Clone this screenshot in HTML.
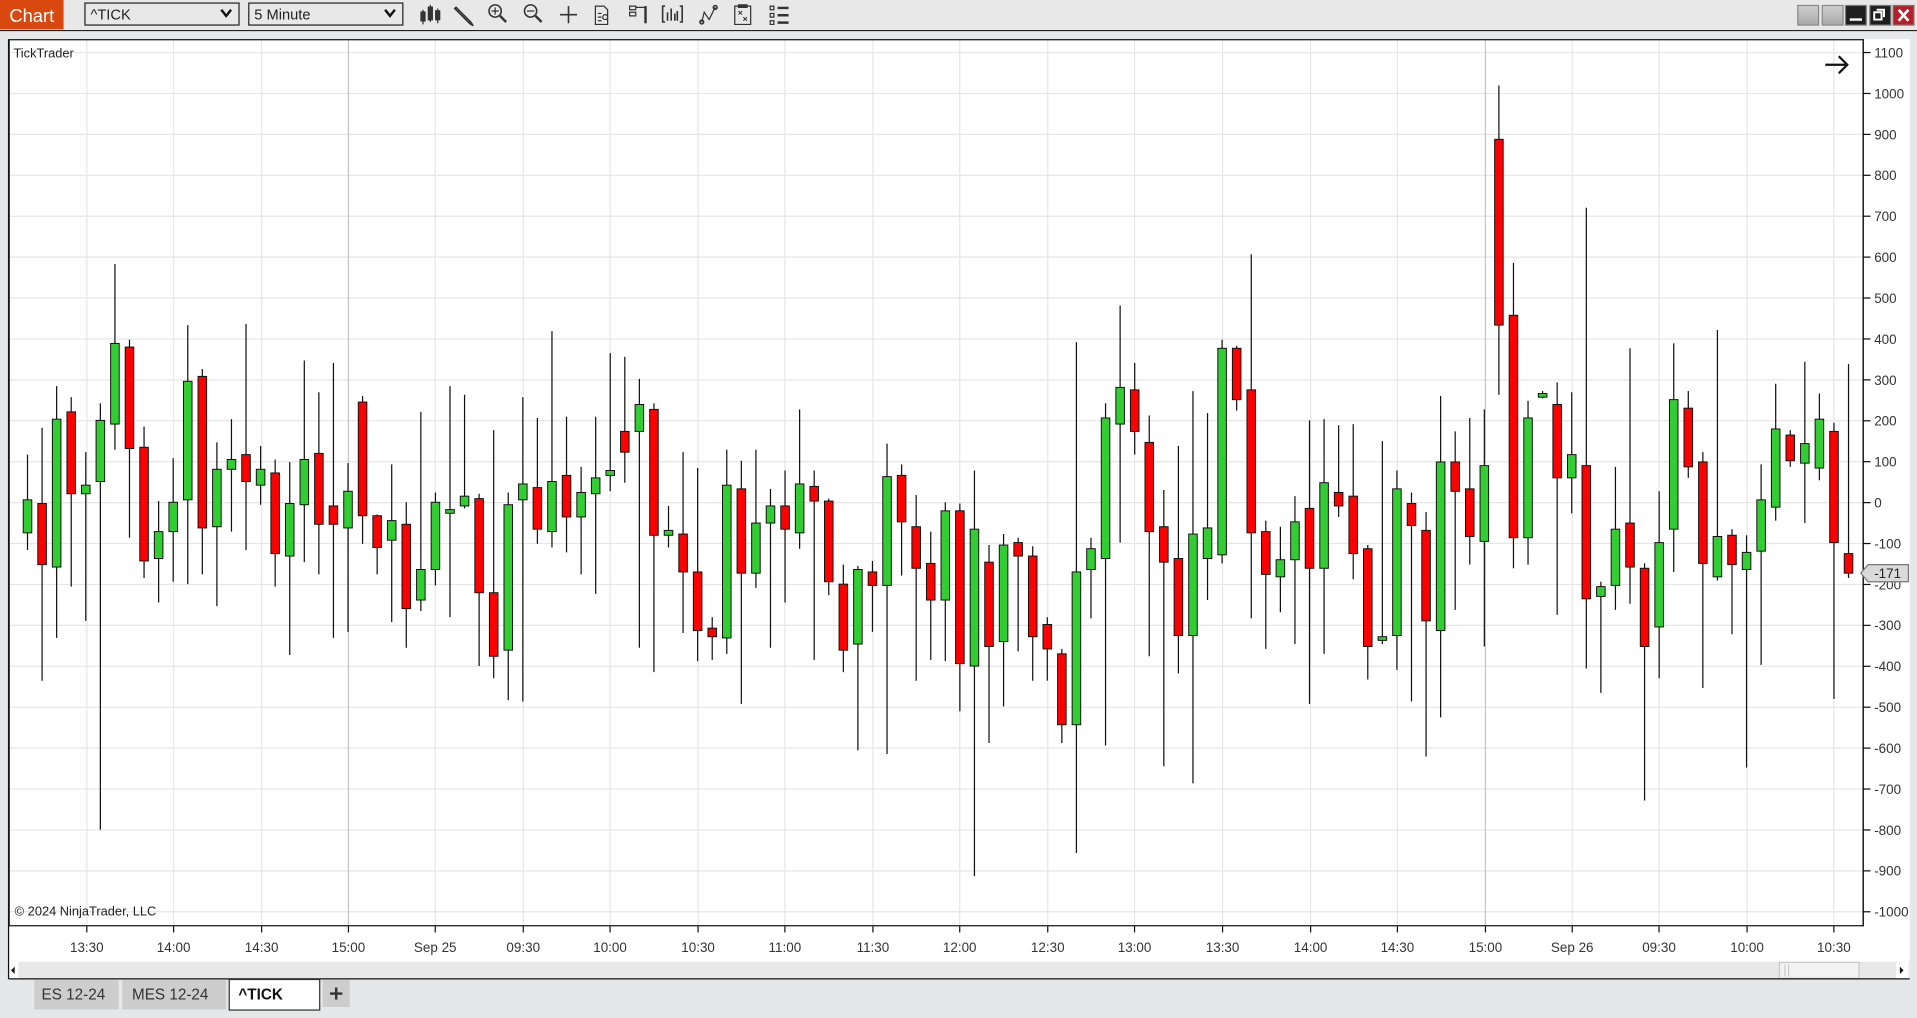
<!DOCTYPE html>
<html><head><meta charset="utf-8"><style>
html,body{margin:0;padding:0;background:#e6e7e8;overflow:hidden}
svg{display:block}
text{font-family:"Liberation Sans",sans-serif}
</style></head><body>
<svg id="s" width="1917" height="1018" viewBox="0 0 1568 833" preserveAspectRatio="none" xmlns="http://www.w3.org/2000/svg">
<rect x="0" y="0" width="1568" height="833" fill="#e6e7e8"/>
<!-- toolbar -->
<rect x="0" y="0" width="1568" height="25" fill="#e8e8e8"/>
<line x1="0" y1="25" x2="1568" y2="25" stroke="#222" stroke-width="1"/>
<rect x="0" y="0" width="52" height="24" fill="#d9480f"/>
<text x="26" y="18" font-size="15" fill="#fff" text-anchor="middle">Chart</text>
<rect x="69.5" y="2.5" width="126" height="18" fill="#e8e8e8" stroke="#222"/>
<text x="74" y="16" font-size="12" fill="#222">^TICK</text>
<path d="M181 8 l4 5 l4 -5" fill="none" stroke="#111" stroke-width="2"/>
<rect x="203.5" y="2.5" width="126" height="18" fill="#e8e8e8" stroke="#222"/>
<text x="208" y="16" font-size="12" fill="#222">5 Minute</text>
<path d="M315 8 l4 5 l4 -5" fill="none" stroke="#111" stroke-width="2"/>
<g stroke="#333" fill="none" stroke-width="1.3">
 <!-- candles icon -->
 <path d="M346 8v12M352 4v14M358 7v12" stroke-width="1"/><rect x="344.5" y="10" width="3" height="7" fill="#333"/><rect x="350.5" y="6" width="3" height="10" fill="#333"/><rect x="356.5" y="9" width="3" height="7" fill="#333"/>
 <!-- pencil -->
 <path d="M373 6 l12 12 l2 3 l-3 -2 l-12 -12 z"/>
 <!-- zoom in -->
 <circle cx="405" cy="9" r="5"/><path d="M409 13 l5 5" stroke-width="2"/><path d="M402 9h6M405 6v6" stroke-width="1"/>
 <!-- zoom out -->
 <circle cx="434" cy="9" r="5"/><path d="M438 13 l5 5" stroke-width="2"/><path d="M431 9h6" stroke-width="1"/>
 <!-- crosshair -->
 <path d="M458 12h14M465 5v14"/>
 <!-- doc zoom -->
 <path d="M487 5h7l3 3v12h-10z" stroke-width="1"/><path d="M489 11h3M489 14h3M489 17h3" stroke-width="1"/><circle cx="495" cy="14" r="2" stroke-width="1"/>
 <!-- panel -->
 <path d="M515 5h5v3h-5zM515 10h5v3h-5zM520 6h8v13" stroke-width="1"/><path d="M528 5v14" stroke-width="2"/>
 <!-- bars bracket -->
 <path d="M544 5h-2v13h2M556 5h2v13h-2M546 10v7M549 7v10M552 11v6M554 9v8" stroke-width="1.3"/>
 <!-- line draw -->
 <path d="M574 18 l2 -8 l4 6 l5 -10" stroke-width="1"/><circle cx="574" cy="18" r="1.5"/><circle cx="585" cy="6" r="1.5"/>
 <!-- clipboard -->
 <path d="M601 5h13v15h-13z M604 4h7v2h-7z" stroke-width="1"/><path d="M604 9l3 3M607 9l-3 3M608 14l3 3M611 14l-3 3" stroke-width="0.8"/>
 <!-- list -->
 <path d="M630 5h3v3h-3zM630 11h3v3h-3zM630 17h3v3h-3z" stroke-width="1"/><path d="M636 6.5h9M636 12.5h9M636 18.5h9" stroke-width="2"/>
</g>
<!-- window buttons -->
<defs><linearGradient id="gg" x1="0" y1="0" x2="0" y2="1"><stop offset="0" stop-color="#cfcfcf"/><stop offset="1" stop-color="#a9a9a9"/></linearGradient></defs>
<rect x="1470.5" y="4.5" width="17" height="16" fill="url(#gg)" stroke="#888"/>
<rect x="1490.5" y="4.5" width="17" height="16" fill="url(#gg)" stroke="#888"/>
<rect x="1509.5" y="4.5" width="17" height="16" fill="#1e1e1e" stroke="#777"/>
<path d="M1513 16h10" stroke="#fff" stroke-width="2"/>
<rect x="1529.5" y="4.5" width="17" height="16" fill="#1e1e1e" stroke="#777"/>
<path d="M1535 8h6v6M1533 10h6v6h-6z" stroke="#fff" stroke-width="1.6" fill="none"/>
<rect x="1548.5" y="4.5" width="17" height="16" fill="#b5202a" stroke="#777"/>
<path d="M1553 8l8 9M1561 8l-8 9" stroke="#fff" stroke-width="2.2"/>
<!-- chart frame -->
<rect x="7" y="32" width="1555" height="769" fill="#fff"/>
<g id="grid" stroke="#e6e6e6" stroke-width="1"></g>
<g id="candles"></g>
<rect x="7.5" y="32.5" width="1516.5" height="725" fill="none" stroke="#111"/>
<line x1="1524" y1="32" x2="1524" y2="758" stroke="#111"/>
<g id="axis" font-size="11" fill="#333"></g>
<text x="11" y="47" font-size="10.5" fill="#222">TickTrader</text>
<text x="12" y="749" font-size="10.5" fill="#222">© 2024 NinjaTrader, LLC</text>
<path d="M1493 53h17M1504 46l7 7l-7 7" fill="none" stroke="#111" stroke-width="1.8"/>
<!-- current price -->
<path d="M1522 469 l6 -7 h33 v14 h-33 z" fill="#dadada" stroke="#777"/>
<text x="1533" y="473" font-size="11" fill="#222">-171</text>
<!-- scrollbar -->
<rect x="7" y="787" width="1555" height="14" fill="#e8e8e8"/>
<rect x="7" y="787" width="8" height="14" fill="#fff"/>
<path d="M12 791v6l-3 -3z" fill="#111"/>
<rect x="1455.5" y="787.5" width="65" height="13" fill="#f3f3f3" stroke="#c8c8c8"/>
<path d="M1460 789v10M1463 789v10" stroke="#ccc"/>
<rect x="1551" y="787" width="10" height="14" fill="#fff"/>
<path d="M1554 791v6l3 -3z" fill="#111"/>
<line x1="7" y1="801" x2="1562" y2="801" stroke="#111"/>
<line x1="7" y1="32" x2="7" y2="801" stroke="#111"/>
<!-- tabs -->
<rect x="28" y="802" width="69" height="24" fill="#cdcdcd"/>
<text x="34" y="818" font-size="12.5" fill="#333">ES 12-24</text>
<rect x="100" y="802" width="85" height="24" fill="#cdcdcd"/>
<text x="108" y="818" font-size="12.5" fill="#333">MES 12-24</text>
<rect x="187.5" y="801.5" width="74" height="25" fill="#fff" stroke="#333"/>
<text x="195" y="818" font-size="12.5" font-weight="bold" fill="#111">^TICK</text>
<rect x="264" y="802" width="22" height="22" fill="#cdcdcd"/>
<path d="M270 813h10M275 808v10" stroke="#333" stroke-width="2"/>
</svg>
<script>
(function(){
var NS="http://www.w3.org/2000/svg";
function el(p,t,a){var e=document.createElementNS(NS,t);for(var k in a)e.setAttribute(k,a[k]);p.appendChild(e);return e;}
var grid=document.getElementById('grid'),ax=document.getElementById('axis'),cg=document.getElementById('candles');
function py(p){return 43+(1100-p)/100*33.48;}
for(var p=1100;p>=-1000;p-=100){var y=py(p);
 el(grid,'line',{x1:8,y1:y,x2:1524,y2:y});
 el(ax,'line',{x1:1524,y1:y,x2:1530,y2:y,stroke:'#111'});
 var t=el(ax,'text',{x:1533,y:y+4});t.textContent=String(p);}
var tl=[["13:30",71],["14:00",142],["14:30",214],["15:00",285],["Sep 25",356],["09:30",428],["10:00",499],["10:30",571],["11:00",642],["11:30",714],["12:00",785],["12:30",857],["13:00",928],["13:30",1000],["14:00",1072],["14:30",1143],["15:00",1215],["Sep 26",1286],["09:30",1357],["10:00",1429],["10:30",1500]];
tl.forEach(function(a){var dark=(a[1]==285||a[1]==1215);
 el(grid,'line',{x1:a[1],y1:33,x2:a[1],y2:757,stroke:dark?'#c4c4c4':'#e6e6e6'});
 el(ax,'line',{x1:a[1],y1:758,x2:a[1],y2:763,stroke:'#111'});
 var t=el(ax,'text',{x:a[1],y:779,'text-anchor':'middle'});t.textContent=a[0];});
var d=[
"G409 436 372 450","R412 462 350 557","G343 464 316 522","R337 404 325 480","G397 404 370 508","G344 394 330 679","G281 347 216 368","R284 367 278 440","R366 459 349 473","G435 457 410 493",
"G411 435 375 476","G312 409 266 478","R308 432 302 470","G384 431 362 496","G376 384 343 435","R372 394 265 450","G384 397 365 413","R387 453 376 480","G412 455 378 536","G376 413 295 460",
"R371 429 321 470","R414 429 297 522","G402 432 379 517","R329 422 324 445","R422 448 421 470","G426 442 380 509","R429 498 411 530","G466 491 337 500","G411 466 403 479","G417 420 316 505",
"G406 414 323 416","R408 485 404 545","R485 537 352 555","G413 532 403 573","G396 409 325 574","R399 433 342 445","G394 435 271 448","R389 423 341 452","G403 423 382 470","G391 404 341 486",
"G385 389 289 402","R353 370 292 395","G331 353 310 530","R335 438 330 550","G434 438 414 448","R437 468 370 518","R468 516 383 541","R514 521 505 540","G397 522 368 535","R400 469 377 576",
"G428 469 368 481","G414 428 400 530","R414 433 385 493","G396 436 335 449","R398 410 385 540","R410 476 408 487","R478 532 462 550","G466 527 463 614","R468 479 459 517","G390 479 363 617",
"R389 427 380 471","R431 465 405 557","R461 491 435 540","G418 491 411 541","R418 543 412 582","G433 545 385 717","R460 529 446 608","G446 525 437 578","R444 455 440 533","R455 521 447 557",
"R511 531 505 557","R535 593 531 608","G468 593 280 698","G449 466 440 506","G342 457 330 610","G317 347 250 444","R319 353 297 372","R362 435 340 537","R431 460 401 627","R457 520 365 551",
"G437 520 320 641","G432 457 338 491","G285 454 278 461","R285 327 283 336","R319 436 208 506","R435 470 426 531","G458 472 431 501","G427 458 406 527","R416 465 344 576","G395 465 343 535",
"R403 414 348 423","R406 453 347 474","R449 529 446 556","G521 524 361 527","G400 520 385 548","R412 430 403 574","R434 508 419 619","G378 516 324 587","R378 402 353 499","R400 439 342 462",
"G381 443 335 529","R114 266 70 323","R258 440 215 465","G342 440 328 462","G322 325 320 326","R331 391 313 503","G372 391 321 420","R381 490 170 547","G480 488 476 567","G433 479 382 499",
"R428 464 285 494","R465 529 461 655","G444 513 402 555","G327 433 281 468","R334 382 320 391","R378 461 370 563","G439 472 270 475","R438 462 433 519","G452 466 438 628","G409 451 380 544",
"G351 415 314 426","R356 377 352 382","G363 379 296 428","G343 383 322 393","R353 444 346 572","R453 469 298 473"];
d.forEach(function(s,i){var c=s[0]=="G"?"#32cd32":"#ff0000";var v=s.slice(1).split(" ").map(Number);
 var x=22.5+i*(1489.5/125);
 el(cg,'line',{x1:x,y1:v[2],x2:x,y2:v[3],stroke:'#111','stroke-width':1});
 el(cg,'rect',{x:x-3.5,y:v[0],width:7,height:Math.max(v[1]-v[0],1.5),fill:c,stroke:'#111','stroke-width':0.8});});
})();
</script>
</body></html>
